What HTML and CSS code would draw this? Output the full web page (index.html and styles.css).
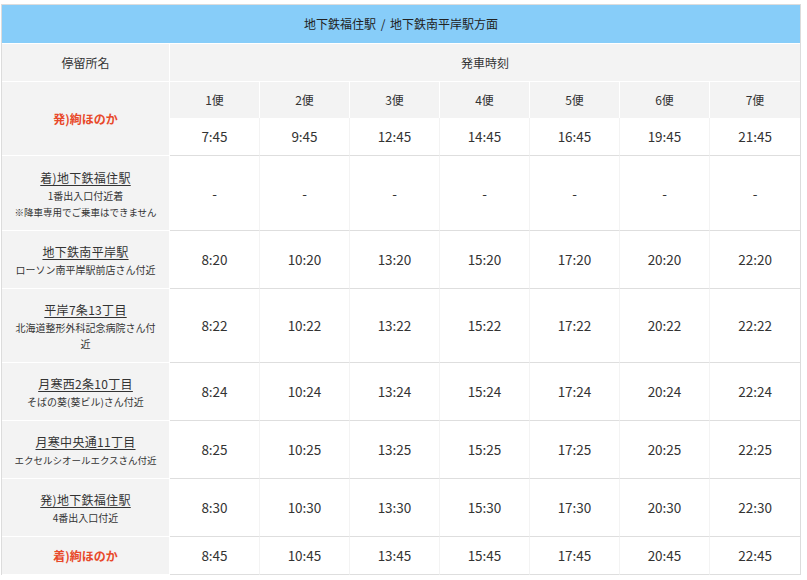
FILE: index.html
```html
<!DOCTYPE html>
<html lang="ja">
<head>
<meta charset="utf-8">
<title>時刻表</title>
<link rel="stylesheet" href="styles.css">
</head>
<body>
<div class="wrap">
<table class="timetable">
<colgroup><col class="c-name"><col class="c-bin"><col class="c-bin"><col class="c-bin"><col class="c-bin"><col class="c-bin"><col class="c-bin"><col class="c-bin"></colgroup>
<thead>
<tr><th class="title" colspan="8">地下鉄福住駅 / 地下鉄南平岸駅方面</th></tr>
<tr><th class="head">停留所名</th><th class="head" colspan="7">発車時刻</th></tr>
</thead>
<tbody>
<tr><th class="stop origin" rowspan="2">発)絢ほのか</th><th class="bin">1便</th><th class="bin">2便</th><th class="bin">3便</th><th class="bin">4便</th><th class="bin">5便</th><th class="bin">6便</th><th class="bin">7便</th></tr>
<tr><td>7:45</td><td>9:45</td><td>12:45</td><td>14:45</td><td>16:45</td><td>19:45</td><td>21:45</td></tr>
<tr class="tall"><th class="stop"><a class="name">着)地下鉄福住駅</a><span class="note">1番出入口付近着</span><span class="note note-sm">※降車専用でご乗車はできません</span></th><td>-</td><td>-</td><td>-</td><td>-</td><td>-</td><td>-</td><td>-</td></tr>
<tr><th class="stop"><a class="name">地下鉄南平岸駅</a><span class="note">ローソン南平岸駅前店さん付近</span></th><td>8:20</td><td>10:20</td><td>13:20</td><td>15:20</td><td>17:20</td><td>20:20</td><td>22:20</td></tr>
<tr><th class="stop"><a class="name">平岸7条13丁目</a><span class="note">北海道整形外科記念病院さん付近</span></th><td>8:22</td><td>10:22</td><td>13:22</td><td>15:22</td><td>17:22</td><td>20:22</td><td>22:22</td></tr>
<tr><th class="stop"><a class="name">月寒西2条10丁目</a><span class="note">そばの葵(葵ビル)さん付近</span></th><td>8:24</td><td>10:24</td><td>13:24</td><td>15:24</td><td>17:24</td><td>20:24</td><td>22:24</td></tr>
<tr><th class="stop"><a class="name">月寒中央通11丁目</a><span class="note note-sm">エクセルシオールエクスさん付近</span></th><td>8:25</td><td>10:25</td><td>13:25</td><td>15:25</td><td>17:25</td><td>20:25</td><td>22:25</td></tr>
<tr><th class="stop"><a class="name">発)地下鉄福住駅</a><span class="note">4番出入口付近</span></th><td>8:30</td><td>10:30</td><td>13:30</td><td>15:30</td><td>17:30</td><td>20:30</td><td>22:30</td></tr>
<tr><th class="stop origin">着)絢ほのか</th><td>8:45</td><td>10:45</td><td>13:45</td><td>15:45</td><td>17:45</td><td>20:45</td><td>22:45</td></tr>
</tbody>
</table>
</div>
</body>
</html>
```

FILE: styles.css
```css
* { box-sizing: border-box; }
html, body { margin: 0; padding: 0; background: #fff; }
body {
  font-family: "Noto Sans CJK JP", "Noto Sans", sans-serif;
  color: #333;
}
.wrap { padding: 4px 0 0 1px; }
.timetable {
  width: 800px;
  table-layout: fixed;
  border-collapse: separate;
  border-spacing: 0;
  border: 1px solid #dcdcdc;
  border-bottom: none;
}
.c-name { width: 168px; }
.c-bin { width: 90px; }
.timetable th,
.timetable td {
  padding: 10px 0;
  text-align: center;
  vertical-align: middle;
  font-weight: normal;
}
.title {
  background: #87cdf9;
  font-size: 12px;
  line-height: 18px;
  color: #222;
  border-bottom: 1px solid #fff;
  word-spacing: 2px;
}
.head {
  background: #f3f3f3;
  font-size: 12px;
  line-height: 17px;
  border-right: 1px solid #fff;
  border-bottom: 1px solid #fff;
}
.head:last-child { border-right: none; }
.bin {
  background: #f3f3f3;
  font-size: 12px;
  line-height: 16px;
  border-right: 1px solid #fff;
}
.bin:last-child { border-right: none; }
.timetable td {
  font-size: 13.5px;
  line-height: 17px;
  color: #333;
  border-right: 1px solid #f3f3f3;
  border-bottom: 1px solid #dedede;
}
.timetable td:last-child { border-right: none; }
.stop {
  background: #f3f3f3;
  border-right: 1px solid #fff;
  border-bottom: 1px solid #fff;
}
.timetable .stop { padding: 10px 10px; }
.timetable .tall .stop { padding-top: 11px; }
.origin {
  color: #e8492a;
  font-size: 12px;
  line-height: 17px;
}
.timetable .origin { font-weight: bold; }
.name {
  display: block;
  font-size: 12px;
  line-height: 21px;
  color: #333;
  letter-spacing: 0.3px;
  text-decoration: underline;
  text-underline-offset: 2px;
}
.note {
  display: block;
  font-size: 10px;
  line-height: 16px;
  color: #333;
}
.note-sm {
  font-size: 9.5px;
  white-space: nowrap;
}
```
